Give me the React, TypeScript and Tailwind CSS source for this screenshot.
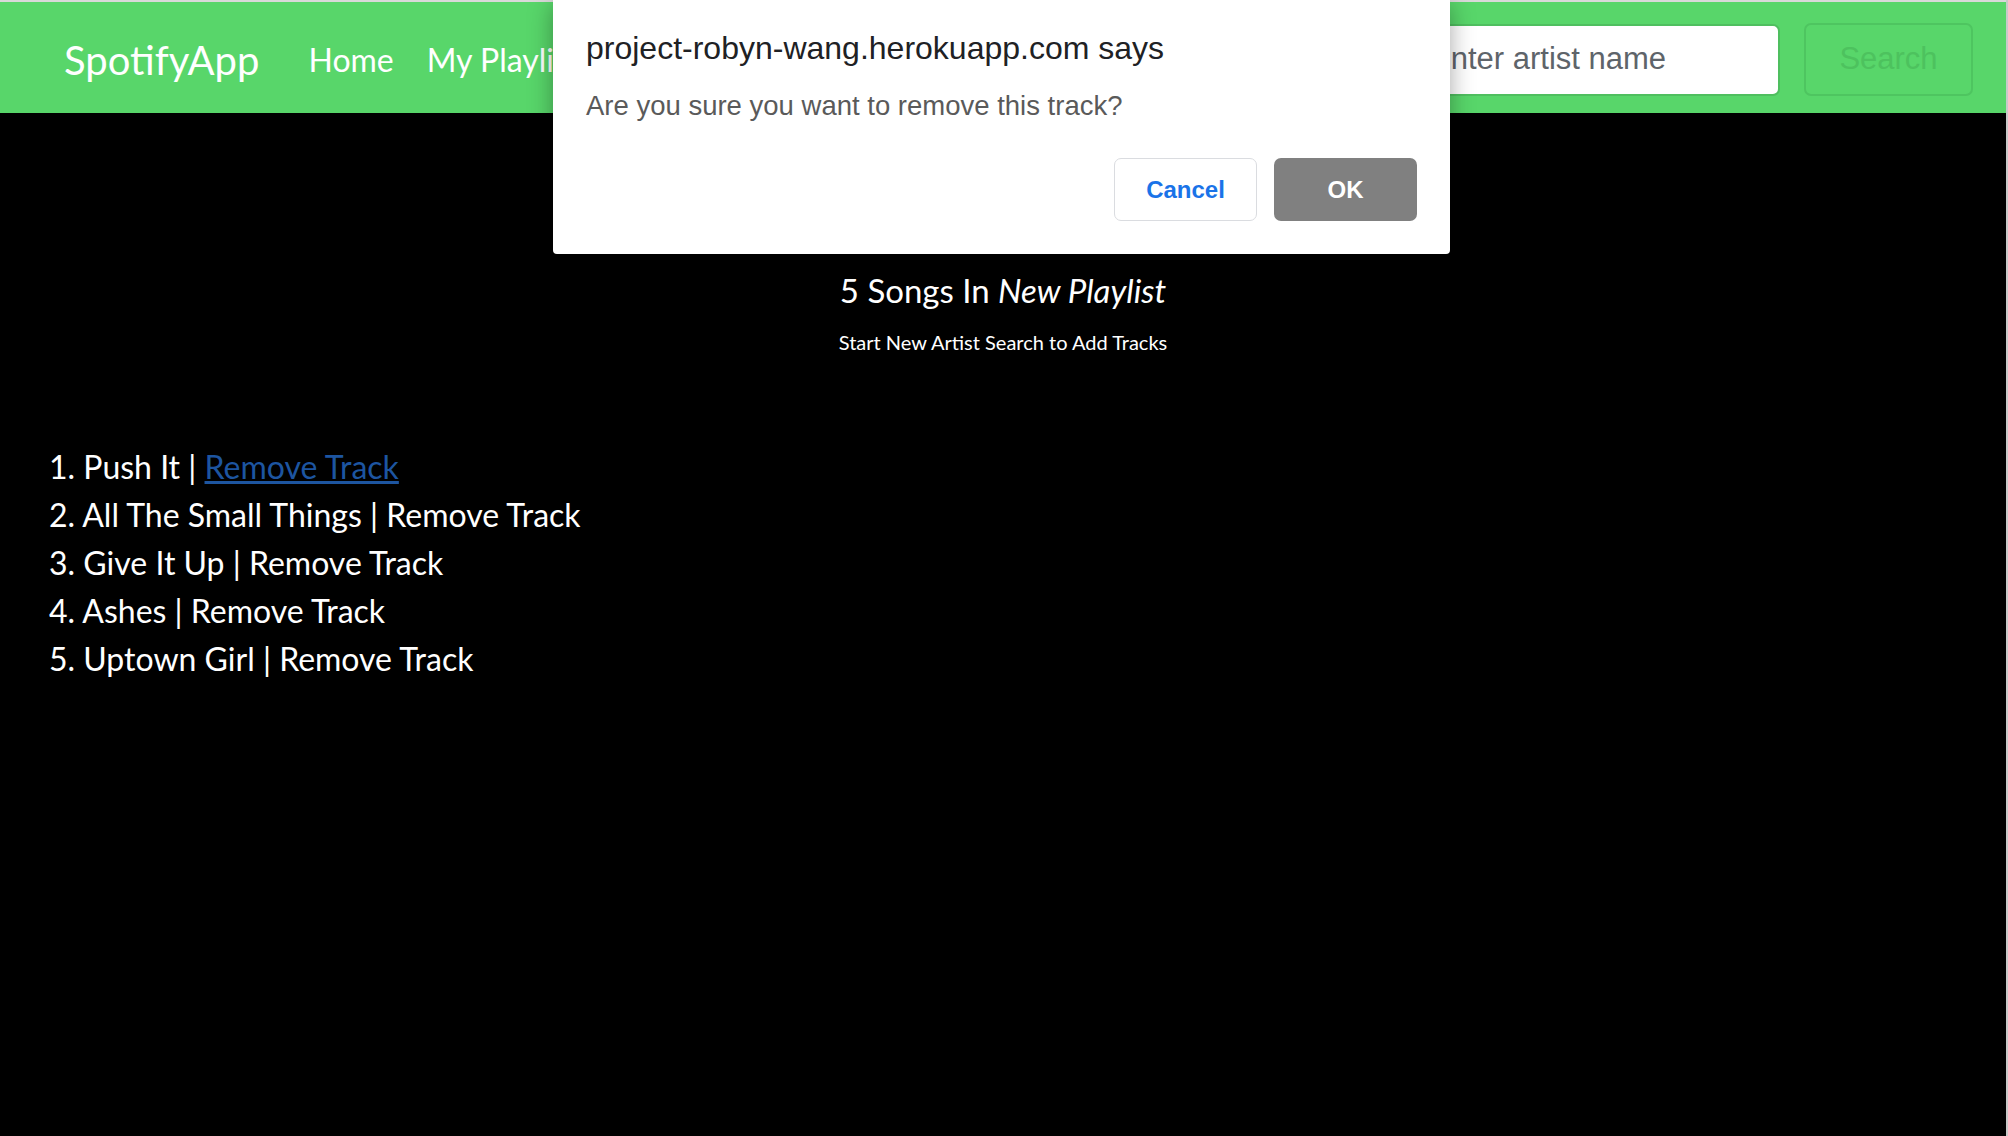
import React from 'react';

const tracks = ["Push It", "All The Small Things", "Give It Up", "Ashes", "Uptown Girl"];

const ConfirmDialog = () => {
    return (
        <div className="absolute top-0 left-[553px] w-[897px] bg-white rounded-b-[4px] px-[33px] pt-[30px] pb-[33px] shadow-[0_4px_24px_rgba(0,0,0,0.35)] font-['Liberation_Sans',Arial,sans-serif]">
            <p className="text-[32px] leading-[36px] text-[#202124]">project-robyn-wang.herokuapp.com says</p>
            <p className="mt-[24px] text-[27.5px] leading-[32px] text-[#5a5a5a]">Are you sure you want to remove this track?</p>
            <div className="flex flex-row justify-end gap-[17px] mt-[36px]">
                <button className="w-[143px] h-[63px] rounded-[7px] border border-[#dadce0] bg-white text-[24px] font-bold text-[#1a73e8]">Cancel</button>
                <button className="w-[143px] h-[63px] rounded-[7px] bg-[#808080] text-[24px] font-bold text-white">OK</button>
            </div>
        </div>
    );
};

const App = () => {
    return (
        <div className="relative flex flex-row w-full h-[1136px] bg-black overflow-hidden font-['Lato','Noto_Sans',sans-serif]">
            <div className="flex-1 flex flex-col">
                <nav className="h-[113px] border-t-2 border-[#d9d9d9] bg-[#58d66a] flex flex-row items-center pl-[64px] pr-[33px] pt-[4px]">
                    <span className="text-[40px] text-white">SpotifyApp</span>
                    <span className="ml-[49px] text-[32px] text-white">Home</span>
                    <span className="ml-[33px] text-[32px] text-white">My Playlist</span>
                    <div className="ml-auto flex flex-row items-center gap-[24px] font-['Liberation_Sans',Arial,sans-serif]">
                        <div className="w-[375px] h-[72px] rounded-[7px] border-2 border-[#4fbf5f] bg-white flex items-center pl-[23px] text-[31px] text-[#5e646a]">
                            Enter artist name
                        </div>
                        <div className="w-[169px] h-[73px] rounded-[7px] border-2 border-[#4ec560] flex items-center justify-center text-[31px] text-[#4dc25e]">
                            Search
                        </div>
                    </div>
                </nav>
                <main className="flex-1 text-white">
                    <h3 className="mt-[158px] text-center text-[33px] leading-[38px]">
                        5 Songs In <em>New Playlist</em>
                    </h3>
                    <p className="mt-[21px] text-center text-[20px] leading-[24px]">Start New Artist Search to Add Tracks</p>
                    <ul className="mt-[89px] pl-[49px] text-[32px] leading-[48px]">
                        {tracks.map((t, i) => (
                            <li key={t}>
                                {i + 1}. {t} | {i === 0
                                    ? <a href="#" className="text-[#1d55a0] underline">Remove Track</a>
                                    : <span>Remove Track</span>}
                            </li>
                        ))}
                    </ul>
                </main>
            </div>
            <div className="w-[2px] bg-[#c9c9c9]"></div>
            <ConfirmDialog />
        </div>
    );
};

export default App;
